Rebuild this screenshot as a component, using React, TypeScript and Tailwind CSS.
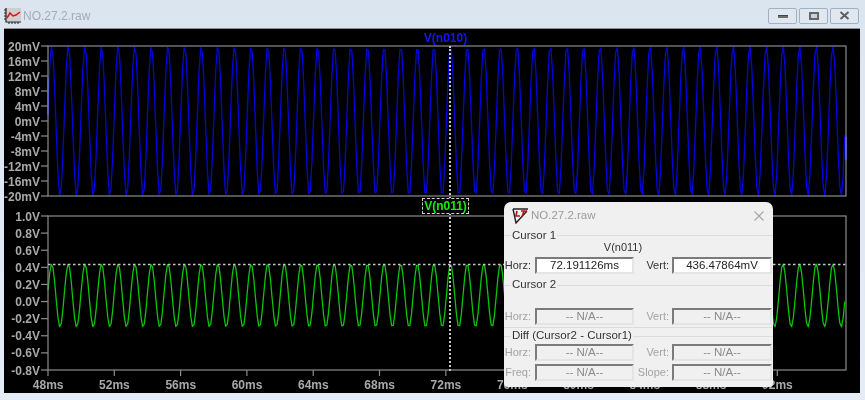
const uiFont = "font-['Liberation_Sans',Arial,sans-serif]";

const MS_PX = 16.62;
const PLOT_W = 798;

// samples a 1kHz sine over the plot, peak sits at x=3.7
function wave(top: number, bottom: number) {
  const mid = (top + bottom) / 2;
  const amp = (bottom - top) / 2;
  const pts: string[] = [];
  for (let x = 0; x <= PLOT_W; x += 1.66) {
    const y = mid - amp * Math.cos(((x - 3.7) / MS_PX) * 2 * Math.PI);
    pts.push(`${x.toFixed(1)},${y.toFixed(1)}`);
  }
  return pts.join(' ');
}

const topLabels = ['20mV', '16mV', '12mV', '8mV', '4mV', '0mV', '-4mV', '-8mV', '-12mV', '-16mV', '-20mV'];
const bottomLabels = ['1.0V', '0.8V', '0.6V', '0.4V', '0.2V', '0.0V', '-0.2V', '-0.4V', '-0.6V', '-0.8V'];
const timeLabels = ['48ms', '52ms', '56ms', '60ms', '64ms', '68ms', '72ms', '76ms', '80ms', '84ms', '88ms', '92ms'];

function YAxis({ labels, rowClass }: { labels: string[]; rowClass: string }) {
  return (
    <div className="w-[36px] shrink-0 flex flex-col">
      {labels.map((l) => (
        <div
          key={l}
          className={`${rowClass} flex items-center justify-end text-[12px] leading-none font-bold text-[#a9a9a9] whitespace-nowrap`}
        >
          {l}
        </div>
      ))}
    </div>
  );
}

function Plot({
  height,
  tickStep,
  tickCount,
  color,
  points,
  xTicks,
  cursorY,
  children,
}: {
  height: number;
  tickStep: number;
  tickCount: number;
  color: string;
  points: string;
  xTicks?: boolean;
  cursorY?: number;
  children?: React.ReactNode;
}) {
  return (
    <svg width={PLOT_W} height={height} viewBox={`0 0 ${PLOT_W} ${height}`} className="overflow-visible ml-[8px] shrink-0">
      <polyline points={points} fill="none" stroke={color} strokeWidth="1.3" strokeLinejoin="round" />
      <rect x="0" y="0" width={PLOT_W} height={height} fill="none" stroke="#8c8c8c" strokeWidth="1.2" />
      {children}
      {Array.from({ length: tickCount }).map((_, i) => (
        <line key={i} x1="-7" x2="0" y1={i * tickStep} y2={i * tickStep} stroke="#8c8c8c" strokeWidth="1.2" />
      ))}
      {xTicks &&
        timeLabels.map((t, i) => (
          <line key={t} x1={i * 66.3} x2={i * 66.3} y1={height} y2={height + 6} stroke="#8c8c8c" strokeWidth="1.2" />
        ))}
      {cursorY !== undefined && (
        <line x1="0" x2={PLOT_W} y1={cursorY} y2={cursorY} stroke="#c4c4c4" strokeWidth="1.4" strokeDasharray="2.5 2.5" />
      )}
    </svg>
  );
}

function ChartIcon() {
  return (
    <svg width="17" height="16" viewBox="0 0 17 16" className="shrink-0">
      <rect x="2" y="0" width="15" height="13" fill="#cfcfcf" />
      <path d="M2 0v14h15" fill="none" stroke="#222" strokeWidth="1.2" />
      <path d="M0 2h2M0 5h2M0 8h2M0 11h2M5 14v2M8 14v2M11 14v2M14 14v2" stroke="#222" strokeWidth="1" />
      <path d="M3 10 L6 5 L9 8 L12 7 L16 4" fill="none" stroke="#e01010" strokeWidth="1.5" />
    </svg>
  );
}

function LtIcon() {
  return (
    <svg width="17" height="16" viewBox="0 0 17 16" className="shrink-0">
      <path d="M1 1 L16 1 M1 1 L4 15 L15 3" fill="none" stroke="#222" strokeWidth="1.4" />
      <path d="M5 3 L4 8 L8 8 M9 3 L15 3 M12 3 L10 9" fill="none" stroke="#b01818" strokeWidth="1.7" />
    </svg>
  );
}

function WinButton({ children, w }: { children: React.ReactNode; w: string }) {
  return (
    <div className={`${w} h-[16px] rounded-[2px] border border-[#a3b0bf] bg-[#dfe7f0] flex items-center justify-center`}>
      {children}
    </div>
  );
}

function GroupHeading({ text, className }: { text: string; className: string }) {
  return (
    <div className={`${className} flex items-center`}>
      <div className="w-[7px] border-t border-[#dcdcdc]" />
      <span className="px-[1px] text-[11.5px] leading-none text-[#333]">{text}</span>
      <div className="flex-1 border-t border-[#dcdcdc]" />
    </div>
  );
}

function Field({ value, active }: { value: string; active?: boolean }) {
  return (
    <div
      className={`h-full w-full flex items-center justify-center border-2 border-t-[#7b7b7b] border-l-[#7b7b7b] border-r-[#e4e4e4] border-b-[#e4e4e4] text-[11.5px] leading-none ${
        active ? 'bg-white text-[#222]' : 'bg-[#f0f0f0] text-[#8a8a8a]'
      }`}
    >
      {value}
    </div>
  );
}

function FieldRow({
  left,
  right,
  leftValue,
  rightValue,
  active,
  className,
}: {
  left: string;
  right: string;
  leftValue: string;
  rightValue: string;
  active?: boolean;
  className: string;
}) {
  const labelColor = active ? 'text-[#333]' : 'text-[#a3a3a3]';
  return (
    <div className={`${className} h-[17px] flex items-center text-[11px] leading-none`}>
      <div className={`w-[27px] text-right ${labelColor}`}>{left}</div>
      <div className="w-[99px] h-full ml-[4px] shrink-0">
        <Field value={leftValue} active={active} />
      </div>
      <div className={`w-[35px] text-right ${labelColor}`}>{right}</div>
      <div className="w-[100px] h-full ml-[3px] shrink-0">
        <Field value={rightValue} active={active} />
      </div>
    </div>
  );
}

function CursorDialog() {
  return (
    <div className="absolute left-[500px] top-[173px] w-[269px] h-[185px] bg-[#f0f0f0] rounded-t-[7px] rounded-b-[4px] flex flex-col z-20">
      <div className="h-[27px] flex items-center pl-[8px] pr-[8px]">
        <LtIcon />
        <span className="ml-[2px] text-[11.5px] text-[#9b9b9b]">NO.27.2.raw</span>
        <svg width="12" height="12" viewBox="0 0 12 12" className="ml-auto">
          <path d="M1.5 1.5 L10.5 10.5 M10.5 1.5 L1.5 10.5" stroke="#a8a8a8" strokeWidth="1.2" />
        </svg>
      </div>
      <GroupHeading text="Cursor 1" className="h-[13px]" />
      <div className="h-[15px] mt-[-2px] ml-[79px] w-[80px] flex items-center justify-center text-[11px] leading-none text-[#333]">
        V(n011)
      </div>
      <FieldRow className="mt-[2px]" left="Horz:" right="Vert:" leftValue="72.191126ms" rightValue="436.47864mV" active />
      <GroupHeading text="Cursor 2" className="h-[14px] mt-[4px]" />
      <FieldRow className="mt-[16px]" left="Horz:" right="Vert:" leftValue="-- N/A--" rightValue="-- N/A--" />
      <div className="mt-[2px] border-t border-[#dcdcdc]" />
      <GroupHeading text="Diff (Cursor2 - Cursor1)" className="h-[16px]" />
      <FieldRow className="" left="Horz:" right="Vert:" leftValue="-- N/A--" rightValue="-- N/A--" />
      <FieldRow className="mt-[3px]" left="Freq:" right="Slope:" leftValue="-- N/A--" rightValue="-- N/A--" />
    </div>
  );
}

export default function App() {
  return (
    <div className={`w-[865px] h-[400px] overflow-hidden flex flex-col bg-gradient-to-b from-[#dbe5f0] to-[#e4edf6] blur-[0.3px] ${uiFont}`}>
      {/* title bar */}
      <div className="h-[28px] shrink-0 flex items-center pl-[4px] pr-[6px] pt-[3px]">
        <ChartIcon />
        <span className="ml-[2px] text-[12px] text-[#a4abb3]">NO.27.2.raw</span>
        <div className="ml-auto flex gap-[2px]">
          <WinButton w="w-[29px]">
            <div className="w-[10px] h-[3px] bg-[#6d6d6d] border-t border-[#444] mt-[2px]" />
          </WinButton>
          <WinButton w="w-[29px]">
            <div className="w-[10px] h-[8px] border-2 border-[#666] bg-[#c9d2dc]" />
          </WinButton>
          <WinButton w="w-[29px]">
            <svg width="11" height="9" viewBox="0 0 11 9">
              <path d="M1.5 1 L9.5 8 M9.5 1 L1.5 8" stroke="#5f5f5f" strokeWidth="2" />
            </svg>
          </WinButton>
        </div>
      </div>

      {/* plot area */}
      <div className="relative ml-[4px] w-[856px] h-[365px] shrink-0 bg-black border-t border-[#8f8f8f] flex flex-col">
        <div className="h-[17px] pl-[44px] pr-[17px] flex items-center justify-center text-[12px] leading-none font-bold text-[#1414ff]">
          V(n010)
        </div>
        <div className="h-[150px] flex">
          <div className="h-[150px] -mt-[7px]">
            <YAxis labels={topLabels} rowClass="h-[15px]" />
          </div>
          <Plot height={150} tickStep={15} tickCount={11} color="#0404dc" points={wave(0, 150)}>
            <line x1="0" x2="0" y1="32" y2="69" stroke="#5a66f0" strokeWidth="1.4" />
            <line x1={PLOT_W} x2={PLOT_W} y1="91" y2="114" stroke="#5a66f0" strokeWidth="1.4" />
          </Plot>
        </div>
        <div className="h-[20px] pl-[44px] pr-[17px] flex items-center justify-center">
          <div className="relative z-10 h-[16px] px-[1px] bg-black border border-dashed border-[#cfcfcf] flex items-center text-[12px] leading-none font-bold text-[#10f010]">
            V(n011)
          </div>
        </div>
        <div className="h-[154px] flex">
          <div className="-mt-[8px]">
            <YAxis labels={bottomLabels} rowClass="h-[17.11px]" />
          </div>
          <Plot
            height={154}
            tickStep={17.11}
            tickCount={10}
            color="#0ac40a"
            points={wave(48, 111)}
            xTicks
            cursorY={48.5}
          />
        </div>
        <div className="flex-1 flex items-end pb-[0px] pl-[11px] text-[12px] leading-none font-bold text-[#a9a9a9]">
          {timeLabels.map((t) => (
            <div key={t} className="w-[66.3px] shrink-0 h-[16px] flex items-center justify-center">
              {t}
            </div>
          ))}
        </div>

        {/* vertical cursor */}
        <div className="absolute left-[445px] top-[17px] h-[325px] border-l-2 border-dotted border-[#c8c8c8]" />

        <CursorDialog />
      </div>
    </div>
  );
}
